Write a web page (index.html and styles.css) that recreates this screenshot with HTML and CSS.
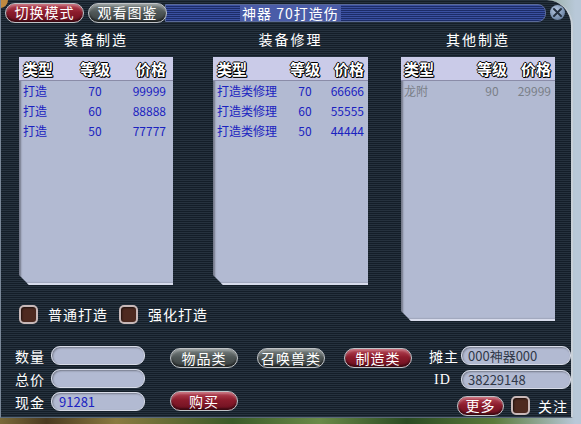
FILE: index.html
```html
<!DOCTYPE html>
<html lang="zh-CN">

<head>
    <meta charset="UTF-8">
    <title>神器70打造伤</title>
    <link rel="stylesheet" href="styles.css">
</head>

<body>
    <div class="window">
        <!-- 顶栏 -->
        <div class="titlebar">
            <span class="corner"></span>
            <button class="pill red tab">切换模式</button>
            <button class="pill grey tab">观看图鉴</button>
            <div class="title-track">
                <span class="title-text">神器 70打造伤</span>
            </div>
            <span class="close">
                <svg width="15" height="15" viewBox="0 0 15 15">
                    <path d="M4 4 L11 11 M11 4 L4 11" stroke="#243040" stroke-width="2" stroke-linecap="round" />
                </svg>
            </span>
        </div>

        <div class="main">
            <div class="left-area">
                <div class="columns">
                    <div class="column">
                        <h2 class="heading">装备制造</h2>
                        <div class="list list-make">
                            <div class="list-head">
                                <span>类型</span><span class="lv">等级</span><span class="price">价格</span>
                            </div>
                            <div class="row"><span>打造</span><span class="lv">70</span><span class="price">99999</span></div>
                            <div class="row"><span>打造</span><span class="lv">60</span><span class="price">88888</span></div>
                            <div class="row"><span>打造</span><span class="lv">50</span><span class="price">77777</span></div>
                        </div>
                    </div>
                    <div class="column">
                        <h2 class="heading">装备修理</h2>
                        <div class="list list-fix">
                            <div class="list-head">
                                <span>类型</span><span class="lv">等级</span><span class="price">价格</span>
                            </div>
                            <div class="row"><span>打造类修理</span><span class="lv">70</span><span class="price">66666</span></div>
                            <div class="row"><span>打造类修理</span><span class="lv">60</span><span class="price">55555</span></div>
                            <div class="row"><span>打造类修理</span><span class="lv">50</span><span class="price">44444</span></div>
                        </div>
                    </div>
                </div>

                <div class="checks">
                    <label class="check"><span class="box"></span>普通打造</label>
                    <label class="check"><span class="box"></span>强化打造</label>
                </div>
            </div>

            <div class="column">
                <h2 class="heading">其他制造</h2>
                <div class="list list-other">
                    <div class="list-head">
                        <span>类型</span><span class="lv">等级</span><span class="price">价格</span>
                    </div>
                    <div class="row gray"><span>龙附</span><span class="lv">90</span><span class="price">29999</span></div>
                </div>
            </div>
        </div>

        <!-- 底部交易区域 -->
        <div class="bottom">
            <div class="fields">
                <div class="field"><span class="label">数量</span><span class="input"></span></div>
                <div class="field"><span class="label">总价</span><span class="input"></span></div>
                <div class="field"><span class="label">现金</span><span class="input blue">91281</span></div>
            </div>

            <div class="actions">
                <div class="action-row">
                    <button class="pill grey">物品类</button>
                    <button class="pill grey">召唤兽类</button>
                    <button class="pill red">制造类</button>
                </div>
                <div class="action-row">
                    <button class="pill red">购买</button>
                </div>
            </div>

            <div class="owner">
                <div class="field"><span class="label">摊主</span><span class="input wide">000神器000</span></div>
                <div class="field"><span class="label id">ID</span><span class="input wide">38229148</span></div>
                <div class="field more">
                    <button class="pill red small">更多</button>
                    <label class="check"><span class="box"></span>关注</label>
                </div>
            </div>
        </div>
    </div>
</body>

</html>
```

FILE: styles.css
```css
body {
    margin: 0;
    width: 581px;
    height: 424px;
    overflow: hidden;
    font-family: "Noto Sans CJK SC", "DejaVu Sans", sans-serif;
    background: linear-gradient(to right, #7a6a3a 0, #4a3a20 8%, #8a7a40 20%, #3a5a28 40%, #6a8a48 55%, #2a4a22 70%, #5a7a3a 85%, #b8c8d8 99%);
}

/* 窗口 */
.window {
    width: 573px;
    height: 418px;
    box-sizing: border-box;
    border-left: 1px solid #7a8898;
    border-right: 2px solid #c8d0d8;
    border-bottom: 1px solid #5a6878;
    border-top-right-radius: 26px;
    background: repeating-linear-gradient(to bottom, #26323e 0, #26323e 1px, #141e28 1px, #141e28 2px);
    color: #fff;
    overflow: hidden;
}

/* 顶栏 */
.titlebar {
    display: flex;
    align-items: center;
    height: 25px;
    padding-left: 4px;
    position: relative;
}

.corner {
    position: absolute;
    left: -1px;
    top: 0;
    width: 8px;
    height: 8px;
    background: #c08a40;
    border-bottom-right-radius: 8px;
}

.pill {
    height: 20px;
    box-sizing: border-box;
    border-radius: 10px;
    border: 1px solid #c0c4c8;
    color: #fff;
    font-family: inherit;
    font-size: 14px;
    line-height: 17px;
    padding: 0;
    letter-spacing: 1px;
    box-shadow: inset 0 -2px 2px rgba(0, 0, 0, 0.45), inset 0 2px 2px rgba(255, 255, 255, 0.25);
}

.pill.red {
    background: linear-gradient(to bottom, #b84858 0, #8c1c2c 45%, #6c1020 100%);
}

.pill.grey {
    background: linear-gradient(to bottom, #7c8484 0, #505858 45%, #3a4040 100%);
}

.tab {
    width: 79px;
    margin-right: 4px;
    position: relative;
    z-index: 1;
}

.title-track {
    flex: 1;
    height: 16px;
    margin-left: -6px;
    border-radius: 0 8px 8px 0;
    background: repeating-linear-gradient(to bottom, #3a50a0 0, #3a50a0 1px, #1c2c68 1px, #1c2c68 2px);
    border: 1px solid #5a6a98;
    display: flex;
    align-items: center;
    padding-left: 74px;
}

.title-text {
    background: #4a5ca8;
    font-size: 14px;
    line-height: 16px;
    height: 16px;
    padding: 0 2px;
    letter-spacing: 1px;
}

.close {
    width: 15px;
    height: 15px;
    margin: 0 6px 0 4px;
    border-radius: 50%;
    background: radial-gradient(circle at 40% 35%, #b8c8e0 0, #7890b0 60%, #4a5a78 100%);
    display: flex;
}

/* 主区域 */
.main {
    display: flex;
    padding-left: 18px;
    gap: 33px;
}

.left-area {
    display: flex;
    flex-direction: column;
}

.columns {
    display: flex;
    gap: 40px;
}

.column {
    display: flex;
    flex-direction: column;
}

.heading {
    margin: 0;
    height: 32px;
    line-height: 29px;
    font-size: 14px;
    font-weight: normal;
    text-align: center;
    letter-spacing: 2px;
}

/* 列表 */
.list {
    width: 154px;
    height: 228px;
    background: #b2bad2;
    box-shadow: inset 2px 0 2px rgba(0, 0, 0, 0.35);
    clip-path: polygon(0 0, 100% 0, 100% 100%, 10px 100%, 0 calc(100% - 10px));
    border-bottom: 2px solid #d8dcec;
    box-sizing: border-box;
}

.list-fix {
    width: 155px;
}

.list-other {
    height: 264px;
}

.list-head,
.row {
    display: grid;
    grid-template-columns: 57px 30px 1fr;
    padding: 0 7px 0 4px;
}

.list-fix .list-head,
.list-fix .row {
    grid-template-columns: 73px 30px 1fr;
    padding: 0 4px 0 4px;
}

.list-other .list-head,
.list-other .row {
    grid-template-columns: 73px 30px 1fr;
    padding: 0 4px 0 3px;
}

.list-head {
    height: 23px;
    line-height: 23px;
    background: #cacbe8;
    border-bottom: 1px solid #8a8ca8;
    font-size: 15px;
    font-weight: bold;
    color: #fff;
    text-shadow: 1px 0 0 #000, -1px 0 0 #000, 0 1px 0 #000, 0 -1px 0 #000, 1px 1px 0 #000;
}

.row {
    height: 20px;
    line-height: 20px;
    font-size: 12px;
    color: #1a22c0;
}

.row.gray {
    color: #7a8088;
}

.lv {
    text-align: center;
    white-space: nowrap;
}

.price {
    text-align: right;
}

/* 复选框 */
.checks {
    display: flex;
    gap: 11px;
    margin-top: 19px;
}

.check {
    display: flex;
    align-items: center;
    gap: 10px;
    font-size: 14px;
    letter-spacing: 1px;
}

.box {
    width: 19px;
    height: 19px;
    box-sizing: border-box;
    border-radius: 5px;
    border: 2px solid #c8b8b8;
    background: #4e2a20;
    box-shadow: inset 1px 1px 2px rgba(0, 0, 0, 0.6);
}

/* 底部区域 */
.bottom {
    display: flex;
    margin-top: 22px;
    padding-left: 14px;
}

.fields,
.owner {
    display: flex;
    flex-direction: column;
    gap: 4px;
}

.field {
    display: flex;
    align-items: center;
    height: 19px;
}

.label {
    width: 36px;
    font-size: 14px;
    letter-spacing: 1px;
}

.input {
    width: 94px;
    height: 19px;
    box-sizing: border-box;
    border-radius: 9px;
    background: #b2bad2;
    border: 1px solid #d8dce8;
    box-shadow: inset 1px 1px 2px rgba(0, 0, 0, 0.35);
    color: #1a22c0;
    font-size: 13px;
    line-height: 17px;
    padding-left: 7px;
}

.input.wide {
    width: 110px;
    color: #303848;
    padding-left: 6px;
}

.actions {
    display: flex;
    flex-direction: column;
    gap: 23px;
    margin-left: 25px;
    margin-top: 2px;
}

.action-row {
    display: flex;
    gap: 19px;
}

.action-row .pill {
    width: 68px;
}

.owner {
    margin-left: 17px;
    gap: 5px;
}

.owner .label {
    width: 32px;
}

.label.id {
    padding-left: 5px;
    width: 27px;
    font-family: "Liberation Serif", serif;
}

.field.more {
    margin-top: 2px;
    padding-left: 28px;
    gap: 7px;
}

.pill.small {
    width: 47px;
}

.field.more .check {
    gap: 8px;
}
```
